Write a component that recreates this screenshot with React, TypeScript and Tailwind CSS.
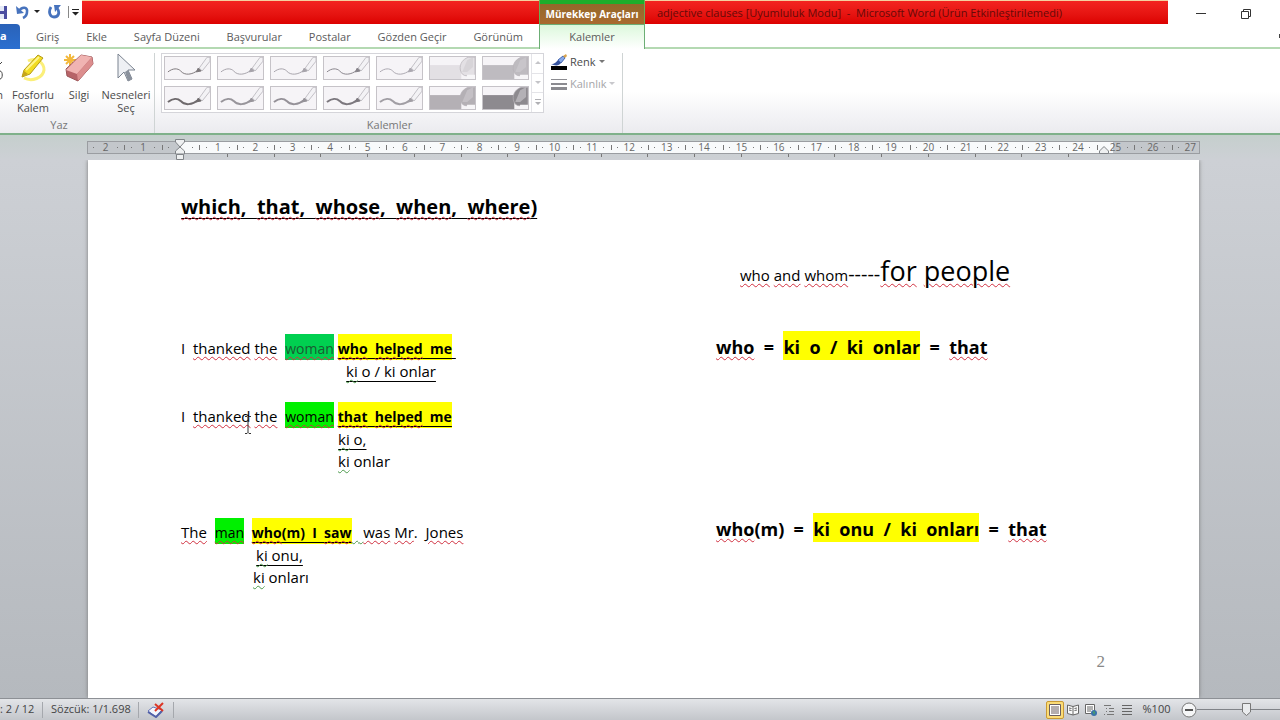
import React from 'react';

type RunKind = 'plain' | 'green' | 'emerald' | 'yellow' | 'yellowLarge';
type Squiggle = 'red' | 'green';

interface TextRunProps {
  children: React.ReactNode;
  kind?: RunKind;
  squiggle?: Squiggle;
}

const TABS = ['Giriş', 'Ekle', 'Sayfa Düzeni', 'Başvurular', 'Postalar', 'Gözden Geçir', 'Görünüm'];

const RULER_MARKS = Array.from({ length: 30 }, (_, i) => i - 2);

const PENS = [
  { kind: 'pen', width: 1, color: '#7d787b' },
  { kind: 'pen', width: 1, color: '#a6a3aa' },
  { kind: 'pen', width: 1, color: '#a6a3aa' },
  { kind: 'pen', width: 1, color: '#87838a' },
  { kind: 'pen', width: 1, color: '#aba8b0' },
  { kind: 'marker', width: 0, color: '#e3e0e4' },
  { kind: 'marker', width: 0, color: '#bebbc0' },
  { kind: 'pen', width: 2, color: '#6f6a6d' },
  { kind: 'pen', width: 2, color: '#98959b' },
  { kind: 'pen', width: 2, color: '#959198' },
  { kind: 'pen', width: 2, color: '#7c787e' },
  { kind: 'pen', width: 2, color: '#a19ea4' },
  { kind: 'marker', width: 0, color: '#b4b0b5' },
  { kind: 'marker', width: 0, color: '#8d8a8f' },
];

const PenPreview: React.FC<{ kind: string; width: number; color: string }> = ({ kind, width, color }) => (
  <svg viewBox="0 0 46 24" className="h-6 w-full" aria-hidden="true">
    {kind === 'pen' ? (
      <>
        <path d="M3 15C8 11 13 11 16 14C20 19 28 18 34 13" fill="none" stroke={color} strokeWidth={width} />
        <path d="M35 11L43 0H46V4L38 14Z" fill="#f3f2f5" stroke="#b5b2b8" strokeWidth="0.8" />
        <path d="M32 15L34 11L37 14Z" fill={color} stroke={color} />
      </>
    ) : (
      <>
        <path d="M0 8H32V23H0Z" fill={color} />
        <path d="M31 13C30 6 34 2 39 0H46V19H38C34 19 32 17 31 13Z" fill={color} stroke="#b5b2b7" strokeWidth="0.7" />
        <path d="M33 15L38 3L44 0V10L38 15Z" fill="#cfccd1" opacity="0.6" />
        <path d="M38 18H46V23H37Z" fill="#f7f6f8" />
      </>
    )}
  </svg>
);

const TextRun: React.FC<TextRunProps> = ({ children, kind = 'plain', squiggle }) => {
  const kinds = {
    plain: '',
    green: 'bg-[#00f000] pt-[5px] pb-[2px] text-[14px]',
    emerald: 'bg-[#00d050] pt-[5px] pb-[2px] text-[14px] text-[#1b5a32]',
    yellow: 'bg-[#ffff00] pt-[5px] pb-[2px] text-[14px] font-bold',
    yellowLarge: 'bg-[#ffff00] pt-1 pb-px font-bold',
  };
  const wave = {
    red: 'underline decoration-wavy decoration-1 decoration-[#d03040] underline-offset-2',
    green: 'underline decoration-wavy decoration-1 decoration-[#4c9a4c] underline-offset-2',
  };
  return <span className={`${kinds[kind]} ${squiggle ? wave[squiggle] : ''}`}>{children}</span>;
};

const Underlined: React.FC<{ children: React.ReactNode }> = ({ children }) => (
  <span className="underline decoration-black decoration-1 underline-offset-4">{children}</span>
);

const TitleBar: React.FC = () => (
  <header className="flex h-6 shrink-0 bg-white">
    <div className="flex w-[82px] shrink-0 items-center overflow-hidden">
      <button aria-label="Kaydet" className="w-2 shrink-0">
        <svg viewBox="0 0 8 16" className="h-4 w-2">
          <path d="M0 2H7V15H0Z" fill="#4a4da0" />
          <path d="M0 2H4V7H0ZM0 10H4V15H0Z" fill="#e4e9f7" />
        </svg>
      </button>
      <button aria-label="Geri Al" className="ml-2 flex items-center gap-1">
        <svg viewBox="0 0 14 16" className="h-4 w-[14px]">
          <path d="M3 7C6 2 12 3 11 8C11 11 9 13 7 14" fill="none" stroke="#4773bd" strokeWidth="2.6" />
          <path d="M0 2L1 10L8 9Z" fill="#4773bd" />
        </svg>
        <svg viewBox="0 0 6 4" className="h-1 w-[6px]"><path d="M0 0H6L3 3Z" fill="#222" /></svg>
      </button>
      <button aria-label="Yinele" className="ml-2">
        <svg viewBox="0 0 14 16" className="h-4 w-[14px]">
          <path d="M3 3C0 8 2 13 6 13C11 13 12 8 9 4" fill="none" stroke="#4773bd" strokeWidth="2.8" />
          <path d="M6 1L13 1L7 8Z" fill="#4773bd" />
        </svg>
      </button>
      <span className="ml-[6px] h-3 w-px shrink-0 bg-[#888]" />
      <button aria-label="Hızlı Erişim Araç Çubuğunu Özelleştir" className="ml-[3px]">
        <svg viewBox="0 0 7 7" className="h-[7px] w-[7px]"><path d="M0 0H7V1H0ZM0 3H7L3.5 6.5Z" fill="#222" /></svg>
      </button>
    </div>
    <div className="w-[457px] shrink-0 border-t border-[#f5d0a0] bg-linear-to-b from-[#f32420] to-[#dc0000]" />
    <div className="flex w-[106px] shrink-0 flex-col border-x border-[#6cae55] bg-[#1eae2b] pt-1">
      <div className="flex flex-1 items-center justify-center bg-linear-to-b from-[#93682a] to-[#a96a2f] pt-px text-[10px] font-bold whitespace-nowrap text-white">
        Mürekkep Araçları
      </div>
    </div>
    <h1 className="min-w-0 flex-1 truncate border-t border-[#f5d0a0] bg-linear-to-b from-[#f32420] to-[#dc0000] pl-3 text-[11px] leading-[23px] whitespace-pre text-[#650a08]">
      adjective clauses [Uyumluluk Modu]  -  Microsoft Word (Ürün Etkinleştirilemedi)
    </h1>
    <div className="flex w-[112px] shrink-0 items-center justify-between pt-1 pr-[29px] pl-7">
      <button aria-label="Simge Durumuna Küçült">
        <svg viewBox="0 0 10 10" className="size-[10px]"><path d="M0 4.5H10" stroke="#333" /></svg>
      </button>
      <button aria-label="Geri Yükle">
        <svg viewBox="0 0 10 10" className="size-[10px]" fill="none" stroke="#333">
          <path d="M0.5 2.5H7.5V9.5H0.5ZM2.5 2.5V0.5H9.5V7.5H7.5" />
        </svg>
      </button>
    </div>
  </header>
);

const TabStrip: React.FC = () => (
  <nav className="flex h-[25px] shrink-0 bg-white text-[11px] text-[#5b5b5b]">
    <button
      aria-label="Dosya"
      className="flex w-5 shrink-0 items-center justify-start rounded-tr-sm bg-linear-to-b from-[#2a62b8] to-[#2a6fd0] font-bold text-white"
    >
      a
    </button>
    <div className="flex w-[519px] shrink-0 items-center justify-between border-b-2 border-[#b4d9b2] pt-[3px] pr-4 pl-4">
      {TABS.map((tab) => (
        <button key={tab} className="whitespace-nowrap">{tab}</button>
      ))}
    </div>
    <button className="w-[106px] shrink-0 border-x border-t border-[#6cae75] bg-linear-to-b from-[#dcf8dc] to-white">
      Kalemler
    </button>
    <div className="flex flex-1 items-center justify-end border-b-2 border-[#b4d9b2]">
      <span className="h-1 w-px bg-[#444]" />
    </div>
  </nav>
);

const HighlighterIcon: React.FC = () => (
  <svg viewBox="0 0 30 30" className="h-[30px] w-[30px]">
    <path d="M10 8C18 4 26 9 26 17C25 25 14 29 6 25" fill="none" stroke="#fbef7a" strokeWidth="3" />
    <path d="M4 24L6 17L20 2L25 5L12 21Z" fill="#f2dc22" stroke="#b59a19" />
    <path d="M8 17L21 4" stroke="#fff58c" strokeWidth="2" />
    <path d="M4 24L6 18L10 21Z" fill="#c6a51a" />
  </svg>
);

const EraserIcon: React.FC = () => (
  <svg viewBox="0 0 32 30" className="h-[30px] w-8">
    <path d="M7 1V13M1 7H13M3 3L11 11M11 3L3 11" stroke="#f3b83b" strokeWidth="2" />
    <path d="M18 2L29 4L30 11L15 28L4 23L3 16Z" fill="#b76468" stroke="#9b5558" />
    <path d="M18 2L29 4L14 21L3 17Z" fill="#f0b4b2" />
    <path d="M14 21L29 4L30 11L15 28Z" fill="#dc8e8e" />
  </svg>
);

const CursorIcon: React.FC = () => (
  <svg viewBox="0 0 20 30" className="h-[30px] w-5">
    <path d="M2 1V25L8 19L12 28L16 26L12 17H19Z" fill="#eef0f4" stroke="#7b8390" />
    <path d="M9 19L12 17L16 26L12 28Z" fill="#8a919c" />
  </svg>
);

const Ribbon: React.FC = () => (
  <section className="flex h-[86px] shrink-0 overflow-hidden border-b-2 border-[#7fb18a] bg-linear-to-b from-white via-white to-[#ebebef] pt-1 text-[11px] text-[#4a4a4a]">
    <div className="flex w-[155px] shrink-0 flex-col border-r border-[#cfd4d4]">
      <div className="flex flex-1 gap-1 leading-[13px]">
        <button className="flex w-[3px] flex-col items-end justify-start overflow-hidden pt-2" aria-label="Kalem">
          <svg viewBox="0 0 3 20" className="h-5 w-[3px] shrink-0"><path d="M0 3L2 1M0 10C3 10 3 18 0 18" fill="none" stroke="#444" /></svg>
          <span className="mt-[7px]">n</span>
        </button>
        <button className="flex w-[52px] flex-col items-center justify-start gap-[5px]">
          <HighlighterIcon />
          <span>Fosforlu Kalem</span>
        </button>
        <button className="flex w-8 flex-col items-center justify-start gap-[5px]">
          <EraserIcon />
          Silgi
        </button>
        <button className="flex w-[54px] flex-col items-center justify-start gap-[5px]">
          <CursorIcon />
          <span>Nesneleri Seç</span>
        </button>
      </div>
      <h2 className="pr-9 text-center leading-4 text-[#777]">Yaz</h2>
    </div>
    <div className="flex w-[468px] shrink-0 border-r border-[#cfd4d4]">
      <div className="flex w-[389px] flex-col">
        <div className="ml-[6px] flex h-[60px] border border-[#d5d5da] bg-white">
          <div className="grid flex-1 grid-cols-7 gap-[6px] p-[2px]">
            {PENS.map((pen, i) => (
              <button key={i} aria-label={`Kalem ${i + 1}`} className="h-6 overflow-hidden border border-[#c6c3c8] bg-[#f6f4f7]">
                <PenPreview {...pen} />
              </button>
            ))}
          </div>
          <div className="flex w-3 flex-col divide-y divide-[#e4e4e8] border-l border-[#e4e4e8]">
            <button aria-label="Yukarı" className="flex flex-1 items-center justify-center">
              <svg viewBox="0 0 6 4" className="h-1 w-[6px]"><path d="M0 3H6L3 0Z" fill="#c4c4c8" /></svg>
            </button>
            <button aria-label="Aşağı" className="flex flex-1 items-center justify-center">
              <svg viewBox="0 0 6 4" className="h-1 w-[6px]"><path d="M0 0H6L3 3Z" fill="#c4c4c8" /></svg>
            </button>
            <button aria-label="Diğer" className="flex flex-1 items-center justify-center">
              <svg viewBox="0 0 6 7" className="h-[7px] w-[6px]"><path d="M0 0H6V1H0ZM0 3H6L3 6Z" fill="#b0b0b4" /></svg>
            </button>
          </div>
        </div>
        <h2 className="mt-auto pl-20 text-center leading-4 text-[#777]">Kalemler</h2>
      </div>
      <div className="flex flex-1 flex-col gap-1 pl-[7px] leading-[18px] whitespace-nowrap">
        <button className="flex items-center gap-[3px]">
          <svg viewBox="0 0 16 16" className="size-4">
            <path d="M0 12H16V16H0Z" fill="#000" />
            <path d="M0 10C4 10 5 8 7 6L10 9C8 12 4 12 0 10Z" fill="#37549f" />
            <path d="M7 6L12 2L14 4L10 9Z" fill="#86a8e8" stroke="#4566b0" />
            <path d="M12 2L15 0L16 2L14 4Z" fill="#d9a34c" />
          </svg>
          Renk
          <svg viewBox="0 0 6 4" className="h-1 w-[6px]"><path d="M0 0H6L3 3Z" fill="#777" /></svg>
        </button>
        <button className="flex items-center gap-[3px] text-[#a5a5a8]">
          <svg viewBox="0 0 16 16" className="size-4"><path d="M0 3H16V4H0ZM0 7H16V9H0ZM0 11H16V14H0Z" fill="#8b8b90" /></svg>
          Kalınlık
          <svg viewBox="0 0 6 4" className="h-1 w-[6px]"><path d="M0 0H6L3 3Z" fill="#c8c8cc" /></svg>
        </button>
      </div>
    </div>
  </section>
);

const Ruler: React.FC = () => (
  <div className="relative h-[25px] shrink-0 bg-linear-to-b from-[#c5cfcd] to-[#cdd0d5] pt-[6px] pr-[80px] pl-[87px]">
    <div className="grid h-[13px] overflow-hidden border border-[#9a9da1]">
      <div className="flex [grid-area:1/1]">
        <div className="w-[92px] shrink-0 bg-[#c3c7cb]" />
        <div className="flex-1 bg-[#f8fafb]" />
        <div className="w-24 shrink-0 bg-[#c3c7cb]" />
      </div>
      <div className="-ml-px grid w-[1122px] grid-cols-30 text-[10px] leading-[11px] text-[#666] [grid-area:1/1]">
        {RULER_MARKS.map((n) => (
          <div key={n} className="flex items-center justify-between">
            <span className="h-[5px] w-px bg-[#777]" />
            <span className="size-px bg-[#777]" />
            <span className="w-3 text-center">{n === 0 ? '' : Math.abs(n)}</span>
            <span className="size-px bg-[#777]" />
            <span className="w-px" />
          </div>
        ))}
      </div>
    </div>
    <div className="flex h-[3px] justify-between pr-[131px] pl-[140px]">
      {Array.from({ length: 19 }, (_, i) => (
        <span key={i} className="h-[3px] w-px bg-[#777]" />
      ))}
    </div>
    <svg viewBox="0 0 10 22" className="absolute top-1 left-[175px] h-[22px] w-[10px]" fill="#eef0f1" stroke="#808488">
      <path d="M0.500 0.500H9.500V3L5 8L0.500 3ZM5 8L9.500 12V15H0.500V12ZM1.500 15.500H8.500V20.500H1.500Z" />
    </svg>
    <svg viewBox="0 0 10 8" className="absolute top-[11px] right-[171px] h-2 w-[10px]" fill="#eef0f1" stroke="#808488">
      <path d="M5 0.500L9.500 5V7.500H0.500V5Z" />
    </svg>
  </div>
);

const LeftColumn: React.FC = () => (
  <div className="text-[15px] leading-[22px] whitespace-pre">
    <p className="pt-9 text-[20px] font-bold">
      <Underlined>
        <TextRun squiggle="red">which</TextRun>,  <TextRun squiggle="red">that</TextRun>,  <TextRun squiggle="red">whose</TextRun>,  <TextRun squiggle="red">when</TextRun>,  <TextRun squiggle="red">where</TextRun>)
      </Underlined>
    </p>
    <p className="pt-[119px]">
      I  <TextRun squiggle="red">thanked</TextRun> <TextRun squiggle="red">the</TextRun>{'  '}
      <TextRun kind="emerald" squiggle="red">woman</TextRun>{' '}
      <Underlined><TextRun kind="yellow"><TextRun squiggle="red">who</TextRun>  <TextRun squiggle="red">helped</TextRun>  me</TextRun> </Underlined>
    </p>
    <p className="pl-[165px]"><Underlined><TextRun squiggle="green">ki</TextRun> o / ki onlar</Underlined></p>
    <p className="pt-[23px]">
      I  <TextRun squiggle="red">thanked</TextRun> <TextRun squiggle="red">the</TextRun>{'  '}
      <TextRun kind="green" squiggle="red">woman</TextRun>{' '}
      <Underlined><TextRun kind="yellow"><TextRun squiggle="red">that</TextRun>  <TextRun squiggle="red">helped</TextRun>  me</TextRun></Underlined>
    </p>
    <p className="pl-[157px]"><Underlined><TextRun squiggle="green">ki</TextRun> o,</Underlined></p>
    <p className="pl-[157px]"><TextRun squiggle="green">ki</TextRun> onlar</p>
    <p className="pt-[49px]">
      <TextRun squiggle="red">The</TextRun>{'  '}
      <TextRun kind="green" squiggle="red">man</TextRun>{'  '}
      <Underlined><TextRun kind="yellow"><TextRun squiggle="red">who</TextRun>(m)  I  <TextRun squiggle="red">saw</TextRun></TextRun></Underlined><TextRun squiggle="green">   </TextRun><TextRun squiggle="red">was</TextRun> <TextRun squiggle="red">Mr</TextRun>.  <TextRun squiggle="red">Jones</TextRun>
    </p>
    <p className="pl-[75px]"><Underlined><TextRun squiggle="green">ki</TextRun> onu,</Underlined></p>
    <p className="pl-[72px]"><TextRun squiggle="green">ki</TextRun> onları</p>
  </div>
);

const RightColumn: React.FC = () => (
  <div className="flex flex-col text-[18px] whitespace-pre">
    <p className="pt-[93px] pl-6 text-[15px] leading-9">
      <TextRun squiggle="red">who</TextRun> <TextRun squiggle="red">and</TextRun> <TextRun squiggle="red">whom</TextRun><span className="text-[20px]">-----</span><span className="text-[27px]"><TextRun squiggle="red">for</TextRun> <TextRun squiggle="red">people</TextRun></span>
    </p>
    <p className="pt-[42px] leading-6 font-bold">
      <TextRun squiggle="red">who</TextRun>  =  <TextRun kind="yellowLarge">ki  o  /  ki  onlar</TextRun>  =  <TextRun squiggle="red">that</TextRun>
    </p>
    <p className="pt-[158px] leading-6 font-bold">
      <TextRun squiggle="red">who</TextRun>(m)  =  <TextRun kind="yellowLarge">ki  onu  /  ki  onları</TextRun>  =  <TextRun squiggle="red">that</TextRun>
    </p>
    <p className="mt-auto pr-[94px] pb-6 text-right font-['Liberation_Serif',serif] text-[17px] leading-6 text-[#888]">2</p>
  </div>
);

const Document: React.FC = () => (
  <main className="relative flex min-h-0 flex-1 overflow-hidden bg-linear-to-b from-[#cdd0d5] to-[#b5b9be] pr-[81px] pl-[88px]">
    <article className="grid flex-1 grid-cols-[535px_1fr] bg-white pl-[93px] font-['Comic_Sans_MS','Open_Sans',sans-serif] text-black shadow-[0_0_4px_#777]">
      <LeftColumn />
      <RightColumn />
    </article>
    <svg viewBox="0 0 8 18" className="absolute top-64 left-[244px] h-[18px] w-2" fill="none" stroke="#333">
      <path d="M1 0.500H3L4 1.500L5 0.500H7M4 1.500V16.500M1 17.500H3L4 16.500L5 17.500H7" />
    </svg>
  </main>
);

const StatusBar: React.FC = () => (
  <footer className="flex h-[22px] shrink-0 items-center border-t border-[#8d9095] bg-linear-to-b from-[#e3e5e8] to-[#c3c6cb] text-[11px] whitespace-nowrap text-[#444]">
    <span className="w-[42px]">: 2 / 12</span>
    <span className="flex h-4 w-24 items-center border-l border-[#a5a8ad] pl-2">Sözcük: 1/1.698</span>
    <button aria-label="Yazım denetimi" className="flex h-4 w-9 items-center justify-center border-x border-[#a5a8ad]">
      <svg viewBox="0 0 18 16" className="h-4 w-[18px]">
        <path d="M1 9L6 5L15 8L9 15Z" fill="#f4f6fd" stroke="#6575ba" />
        <path d="M1 10L9 15L15 9" fill="none" stroke="#5261a8" strokeWidth="2" />
        <path d="M8 2L16 9M16 1L8 9" stroke="#dc3525" strokeWidth="2" />
      </svg>
    </button>
    <div className="ml-auto flex items-center">
      <button aria-label="Sayfa Düzeni" className="flex size-[18px] items-center justify-center rounded-xs border border-[#c99a35] bg-[#fbdc77]">
        <svg viewBox="0 0 12 12" className="size-3"><path d="M0.500 0.500H11.500V11.500H0.500Z" fill="#fff" stroke="#6b5f60" /><path d="M2 3H10M2 5H10M2 7H10M2 9H10" stroke="#6b5f60" /></svg>
      </button>
      <button aria-label="Tam Ekran Okuma" className="flex w-[18px] justify-center">
        <svg viewBox="0 0 12 12" className="size-3" fill="#fafafa" stroke="#666"><path d="M0.500 1L6 2.500L11.500 1V9.500L6 11L0.500 9.500ZM6 2.500V11M2 4L4.500 4.500M2 6L4.500 6.500M7.500 4.500L10 4M7.500 6.500L10 6" /></svg>
      </button>
      <button aria-label="Web Düzeni" className="flex w-[18px] justify-center">
        <svg viewBox="0 0 12 12" className="size-3"><path d="M0.500 0.500H9.500V9.500H0.500Z" fill="#fff" stroke="#666" /><path d="M2 3H8M2 5H8M2 7H6" stroke="#666" /><circle cx="9" cy="9" r="3" fill="#3a72aa" /><path d="M8 7L10 8L9 11" fill="#4bac54" /></svg>
      </button>
      <button aria-label="Anahat" className="flex w-[18px] justify-center">
        <svg viewBox="0 0 12 12" className="size-3" stroke="#777"><path d="M1 1.500H8M3 4.500H4M6 4.500H11M3 7.500H4M6 7.500H11M1 10.500H2M4 10.500H11" /></svg>
      </button>
      <button aria-label="Taslak" className="flex w-[18px] justify-center">
        <svg viewBox="0 0 12 12" className="size-3" stroke="#666"><path d="M1 1.500H11M1 4.500H11M1 7.500H11M1 10.500H11" /></svg>
      </button>
      <button className="w-[45px] pr-1">%100</button>
      <button aria-label="Uzaklaştır">
        <svg viewBox="0 0 16 16" className="size-4"><circle cx="8" cy="8" r="7" fill="#f5f6f7" stroke="#777" /><path d="M4 8H12" stroke="#555" strokeWidth="2" /></svg>
      </button>
      <div className="relative flex w-[83px] items-center">
        <span className="h-px w-full bg-[#808388]" />
        <svg viewBox="0 0 9 13" className="absolute left-[45px] h-[13px] w-[9px]"><path d="M0.500 0.500H8.500V9L4.500 12.500L0.500 9Z" fill="#e9ebed" stroke="#777" /></svg>
      </div>
    </div>
  </footer>
);

const App: React.FC = () => (
  <div className="flex h-screen flex-col overflow-hidden bg-white font-['Open_Sans','Noto_Sans',sans-serif]">
    <TitleBar />
    <TabStrip />
    <Ribbon />
    <Ruler />
    <Document />
    <StatusBar />
  </div>
);

export default App;
